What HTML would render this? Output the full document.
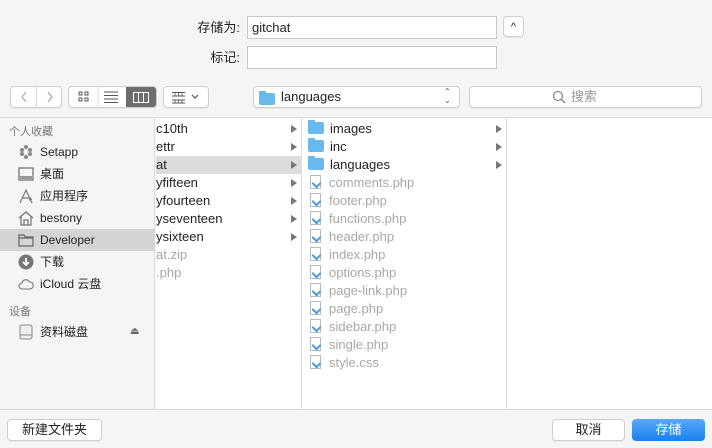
<!DOCTYPE html>
<html><head><meta charset="utf-8"><style>
*{box-sizing:border-box;margin:0;padding:0}
body{width:712px;height:448px;background:#f5f5f5;font-family:"Liberation Sans","Noto Sans CJK SC",sans-serif;font-size:13px;color:#222;position:relative;overflow:hidden}
.a{position:absolute;line-height:16px}
.lbl{font-size:13px;text-align:right;width:60px}
.inp{background:#fff;border:1px solid #c8c8c8;height:23px;padding:0 4px;font-size:13px;line-height:21px}
.btn{background:#fff;border:1px solid #cfcfcf;border-radius:4px;box-shadow:0 1px 0 rgba(0,0,0,.05)}
.sb{left:0;top:118px;width:155px;height:291px;background:#f5f5f5;border-right:1px solid #ddd}
.col{top:118px;height:291px;background:#fff;border-right:1px solid #ddd}
.row{position:absolute;left:0;right:0;height:18px;line-height:18px;font-size:13px;white-space:nowrap}
.tri{position:absolute;right:4px;top:5px;width:0;height:0;border-left:6px solid #777;border-top:4px solid transparent;border-bottom:4px solid transparent}
.fd{display:inline-block;width:16px;height:12px;background:#67b9ee;border-radius:2px;vertical-align:-1px;margin:0 6px 0 6px;position:relative}
.fd:before{content:"";position:absolute;left:0;top:-2px;width:7px;height:3px;background:#67b9ee;border-radius:1px 1px 0 0}
.fi{display:inline-block;width:11px;height:14px;border:1px solid #bbb;background:#fff;vertical-align:-2px;margin:0 8px 0 8px;position:relative}
.fi:after{content:"";position:absolute;left:2px;top:4px;width:5px;height:5px;border-left:2px solid #4a9be0;border-bottom:2px solid #4a9be0;transform:rotate(-45deg)}
.g{color:#a8a8a8}
.si{position:absolute;left:18px;width:16px;height:16px}
.st{position:absolute;left:40px;font-size:12px;line-height:16px;height:16px}
</style></head><body>
<div class="a lbl" style="left:180px;top:20px">存储为:</div>
<div class="a inp" style="left:247px;top:16px;width:250px">gitchat</div>
<div class="a btn" style="left:503px;top:16px;width:21px;height:21px;text-align:center;font-size:11px;line-height:20px">^</div>
<div class="a lbl" style="left:180px;top:50px">标记:</div>
<div class="a inp" style="left:247px;top:46px;width:250px"></div>

<div class="a btn" style="left:10px;top:86px;width:52px;height:22px"></div>
<div class="a" style="left:36px;top:87px;width:1px;height:20px;background:#ddd"></div>
<svg class="a" style="left:10px;top:86px" width="52" height="22"><path d="M16 6 L12 11 L16 16 M38 6 L42 11 L38 16" fill="none" stroke="#aaa" stroke-width="1.2"/></svg>
<div class="a btn" style="left:68px;top:86px;width:89px;height:22px;overflow:hidden"><div style="position:absolute;right:0;top:0;width:30px;height:22px;background:#6d6d6d"></div></div>
<svg class="a" style="left:68px;top:86px" width="89" height="22"><g fill="none" stroke="#555" stroke-width="1"><rect x="11" y="6" width="3" height="3"/><rect x="17" y="6" width="3" height="3"/><rect x="11" y="12" width="3" height="3"/><rect x="17" y="12" width="3" height="3"/><path d="M36 6h14M36 9.5h14M36 13h14M36 16.5h14"/></g><g fill="none" stroke="#fff"><rect x="65.5" y="6.5" width="15" height="10"/><path d="M70.5 6.5v10M75.5 6.5v10"/></g><path d="M30 0v22" stroke="#ddd"/></svg>
<div class="a btn" style="left:163px;top:86px;width:46px;height:22px"></div>
<svg class="a" style="left:163px;top:86px" width="46" height="22"><g fill="none" stroke="#555"><path d="M9 6.5h13M9 10h13M9 14h13M9 17h13"/><path d="M12 6v4M15.5 6v4M19 6v4M12 14v3M15.5 14v3M19 14v3" stroke-width=".8"/><path d="M29 9l3 3 3-3" stroke-width="1.2"/></g></svg>
<div class="a btn" style="left:253px;top:86px;width:207px;height:22px"></div>
<span class="a fd" style="left:253px;top:92px;margin-left:6px"></span>
<div class="a" style="left:281px;top:89px;font-size:13px">languages</div>
<div class="a" style="left:444px;top:87px;font-size:8px;line-height:9px;color:#555">⌃<br>⌄</div>
<div class="a btn" style="left:469px;top:86px;width:233px;height:22px"></div>
<svg class="a" style="left:552px;top:90px" width="14" height="14"><circle cx="6" cy="6" r="4.5" fill="none" stroke="#888" stroke-width="1.2"/><path d="M9.3 9.3L13 13" stroke="#888" stroke-width="1.4"/></svg>
<div class="a" style="left:571px;top:89px;color:#999">搜索</div>
<div class="a" style="left:0;top:117px;width:712px;height:1px;background:#ddd"></div>

<div class="a sb">
<div class="a" style="left:9px;top:6px;font-size:11px;color:#777">个人收藏</div>
<div class="a" style="left:0;top:111px;width:155px;height:22px;background:#d4d4d4"></div>
<svg class="si" style="top:26px" viewBox="0 0 16 16"><g fill="#888"><circle cx="8" cy="3" r="2"/><circle cx="4" cy="6" r="2"/><circle cx="12" cy="6" r="2"/><circle cx="4" cy="10" r="2"/><circle cx="12" cy="10" r="2"/><circle cx="8" cy="13" r="2"/></g></svg><div class="st" style="top:26px">Setapp</div>
<svg class="si" style="top:48px" viewBox="0 0 16 16"><rect x="1" y="2" width="14" height="12" fill="none" stroke="#777" stroke-width="1.3"/><rect x="2" y="10" width="12" height="3" fill="#999"/></svg><div class="st" style="top:48px">桌面</div>
<svg class="si" style="top:70px" viewBox="0 0 16 16"><path d="M2 15L8 2l6 13M4 10h9M11 12l3-1" fill="none" stroke="#777" stroke-width="1.2"/></svg><div class="st" style="top:70px">应用程序</div>
<svg class="si" style="top:92px" viewBox="0 0 16 16"><path d="M1 8L8 2l7 6M3 7v8h10V7M6 15v-5h4v5" fill="none" stroke="#777" stroke-width="1.3"/></svg><div class="st" style="top:92px">bestony</div>
<svg class="si" style="top:114px" viewBox="0 0 16 16"><path d="M1 3h5l1 2h8v9H1z M1 6h14" fill="none" stroke="#666" stroke-width="1.2"/></svg><div class="st" style="top:114px">Developer</div>
<svg class="si" style="top:136px" viewBox="0 0 16 16"><circle cx="8" cy="8" r="7.5" fill="#777"/><path d="M8 4v7M5 8l3 3 3-3" fill="none" stroke="#fff" stroke-width="1.8"/></svg><div class="st" style="top:136px">下载</div>
<svg class="si" style="top:158px" viewBox="0 0 16 16"><path d="M4 13a3 3 0 0 1 0-6 4 4 0 0 1 7.5-1A3.5 3.5 0 0 1 12 13z" fill="none" stroke="#777" stroke-width="1.1"/></svg><div class="st" style="top:158px">iCloud 云盘</div>
<div class="a" style="left:9px;top:186px;font-size:11px;color:#777">设备</div>
<svg class="si" style="top:206px" viewBox="0 0 16 16"><rect x="2" y="1" width="12" height="14" rx="2" fill="#eee" stroke="#888"/><path d="M2 11h12" stroke="#888"/></svg><div class="st" style="top:206px">资料磁盘</div>
<div class="a" style="left:130px;top:206px;font-size:10px;color:#666">⏏</div>
</div>

<div class="a col" style="left:156px;width:146px">
<div class="row" style="top:2px">c10th<i class="tri"></i></div>
<div class="row" style="top:20px">ettr<i class="tri"></i></div>
<div class="row" style="top:38px;background:#dcdcdc">at<i class="tri"></i></div>
<div class="row" style="top:56px">yfifteen<i class="tri"></i></div>
<div class="row" style="top:74px">yfourteen<i class="tri"></i></div>
<div class="row" style="top:92px">yseventeen<i class="tri"></i></div>
<div class="row" style="top:110px">ysixteen<i class="tri"></i></div>
<div class="row g" style="top:128px">at.zip</div>
<div class="row g" style="top:146px">.php</div>
</div>
<div class="a col" style="left:302px;width:205px">
<div class="row" style="top:2px"><span class="fd"></span>images<i class="tri"></i></div>
<div class="row" style="top:20px"><span class="fd"></span>inc<i class="tri"></i></div>
<div class="row" style="top:38px"><span class="fd"></span>languages<i class="tri"></i></div>
<div class="row g" style="top:56px"><span class="fi"></span>comments.php</div>
<div class="row g" style="top:74px"><span class="fi"></span>footer.php</div>
<div class="row g" style="top:92px"><span class="fi"></span>functions.php</div>
<div class="row g" style="top:110px"><span class="fi"></span>header.php</div>
<div class="row g" style="top:128px"><span class="fi"></span>index.php</div>
<div class="row g" style="top:146px"><span class="fi"></span>options.php</div>
<div class="row g" style="top:164px"><span class="fi"></span>page-link.php</div>
<div class="row g" style="top:182px"><span class="fi"></span>page.php</div>
<div class="row g" style="top:200px"><span class="fi"></span>sidebar.php</div>
<div class="row g" style="top:218px"><span class="fi"></span>single.php</div>
<div class="row g" style="top:236px"><span class="fi"></span>style.css</div>
</div>
<div class="a col" style="left:507px;width:205px;border-right:none"></div>
<div class="a" style="left:0;top:409px;width:712px;height:1px;background:#d8d8d8"></div>

<div class="a btn" style="left:7px;top:419px;width:95px;height:22px;text-align:center;line-height:20px">新建文件夹</div>
<div class="a btn" style="left:552px;top:419px;width:73px;height:22px;text-align:center;line-height:20px">取消</div>
<div class="a" style="left:632px;top:419px;width:73px;height:22px;border-radius:4px;background:linear-gradient(#5aa9f8,#1a7ff0);color:#fff;text-align:center;line-height:22px">存储</div>
</body></html>
